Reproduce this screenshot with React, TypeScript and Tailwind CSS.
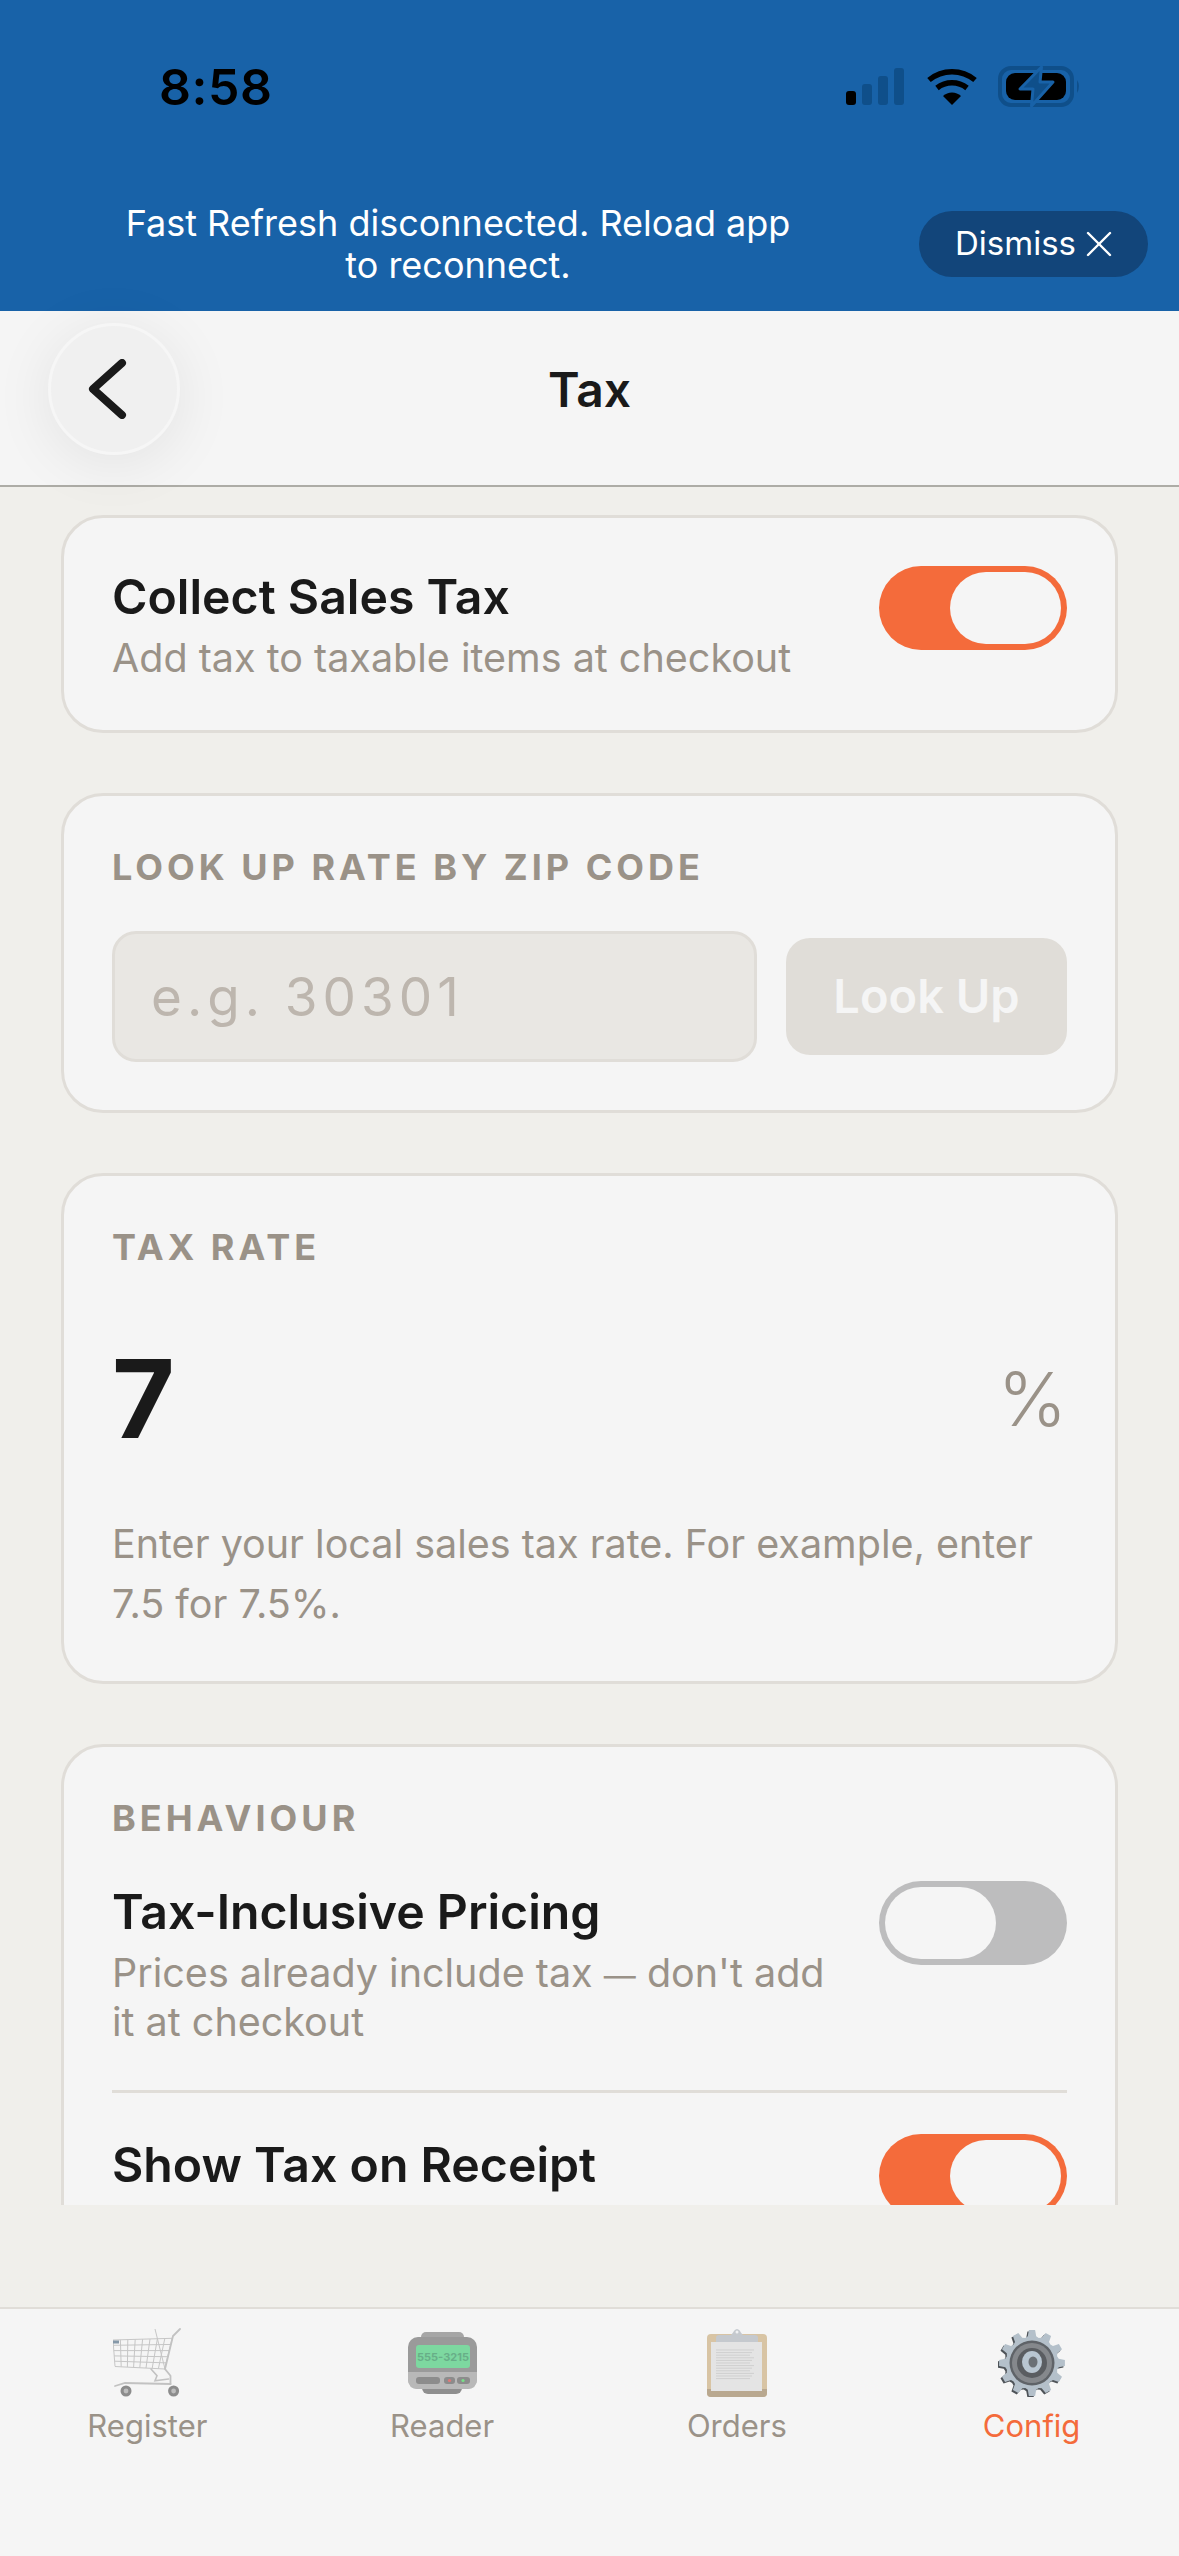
import React from "react";

function StatusIcons() {
  return (
    <svg width="250" height="55" viewBox="0 0 250 55" className="shrink-0">
      {/* signal */}
      <rect x="6" y="32" width="10" height="14" rx="3" fill="#000" />
      <rect x="22" y="25" width="10" height="21" rx="3" fill="#0f4f8a" />
      <rect x="38" y="17" width="10" height="29" rx="3" fill="#0f4f8a" />
      <rect x="54" y="9" width="10" height="37" rx="3" fill="#0f4f8a" />
      {/* wifi */}
      <path d="M89 21 A 36 36 0 0 1 135 21" fill="none" stroke="#000" strokeWidth="5.5" />
      <path d="M97 29 A 24 24 0 0 1 127 29" fill="none" stroke="#000" strokeWidth="5.5" />
      <path d="M103 37 L112 46 L121 37 A 13 13 0 0 0 103 37 Z" fill="#000" />
      {/* battery */}
      <rect x="160" y="9" width="72" height="37" rx="11" fill="none" stroke="#0f4f8a" strokeWidth="4" />
      <rect x="166" y="14" width="60" height="27" rx="9" fill="#000" />
      <path d="M237 21 Q 241 27 237 34 Z" fill="#0f4f8a" />
      <path d="M201.5 8 L180 30 L193 30 L191.5 47 L213 23 L200 23 Z" fill="#0f4f8a" stroke="#1862a8" strokeWidth="3" strokeLinejoin="round" />
    </svg>
  );
}

function CartIcon() {
  const vertical = [0, 1, 2, 3, 4, 5, 6, 7, 8];
  const horizontal = [0, 1, 2, 3, 4, 5];
  return (
    <svg width="68" height="70" viewBox="0 0 68 70">
      <g stroke="#c6c6c6" strokeWidth="1" fill="none">
        {vertical.map((i) => (
          <line key={i} x1={i * 7.4} y1={12 - i * 0.2} x2={2 + i * 6.2} y2={38.3 + i * 0.34} />
        ))}
        {horizontal.map((i) => (
          <line key={i} x1={i * 0.4} y1={12 + i * 5.3} x2={59.4 - i * 1.52} y2={10.3 + i * 6.14} />
        ))}
        <line x1="42" y1="1" x2="52" y2="41" />
      </g>
      <g stroke="#c2c2c2" fill="none" strokeLinecap="round">
        <path d="M67 1 L60 8 L52 41 L57.5 47.7 L57.5 56" strokeWidth="1.8" />
        <path d="M2 58 L12 55 L57.5 56" strokeWidth="1.8" />
        <path d="M38 41 L44 47.7 L42 52.7 L55.6 51" strokeWidth="1.6" />
      </g>
      <rect x="0" y="12.5" width="6" height="3" fill="#8598a8" />
      <circle cx="13" cy="63" r="5.5" fill="#8c8c8c" />
      <circle cx="13" cy="63" r="2.4" fill="#bdbdbd" />
      <circle cx="60.6" cy="63" r="5.5" fill="#8c8c8c" />
      <circle cx="60.6" cy="63" r="2.4" fill="#bdbdbd" />
    </svg>
  );
}

function PagerIcon() {
  return (
    <svg width="69" height="62" viewBox="0 0 69 62">
      <rect x="13" y="0" width="43" height="12" rx="5" fill="#a6a6a6" />
      <rect x="14" y="50" width="40" height="12" rx="6" fill="#8f8f8f" />
      <rect x="0" y="5" width="69" height="52" rx="10" fill="#9a9a9a" />
      <path d="M0 40 H69 V47 Q69 57 59 57 H10 Q0 57 0 47 Z" fill="#b8b8b8" />
      <rect x="8" y="13" width="54" height="23" rx="3" fill="#7dd8a0" />
      <text x="35" y="29" textAnchor="middle" fontSize="11" fontWeight="700" fill="#68ae88" fontFamily="Inter, sans-serif">
        555-3215
      </text>
      <rect x="8" y="45" width="24" height="7" rx="3" fill="#8c8c8c" />
      <rect x="36" y="45" width="11" height="7" rx="3" fill="#8c8c8c" />
      <circle cx="41.5" cy="48.5" r="1.6" fill="#e07878" />
      <rect x="49" y="45" width="13" height="7" rx="3" fill="#8c8c8c" />
      <circle cx="55" cy="48.5" r="1.6" fill="#78e088" />
    </svg>
  );
}

function ClipboardIcon() {
  const lines = [0, 1, 2, 3, 4, 5, 6, 7, 8, 9, 10, 11];
  return (
    <svg width="60" height="68" viewBox="0 0 60 68">
      <rect x="0" y="5" width="60" height="63" rx="4" fill="#d8c4a4" />
      <path d="M0 60 H60 V64 Q60 68 56 68 H4 Q0 68 0 64 Z" fill="#b9a88f" />
      <rect x="4" y="13" width="51" height="49" fill="#e4e4e4" />
      {lines.map((i) => (
        <line key={i} x1="9" y1={21 + i * 2.6} x2={47 - (i % 3) * 2} y2={21 + i * 2.6} stroke="#cfcfcf" strokeWidth="1" />
      ))}
      <path d="M9 9 Q9 6 12 6 H23 C26 6 26 1 30 0 C34 1 34 6 37 6 H48 Q51 6 51 9 V13 H9 Z" fill="#c5c9ce" />
      <circle cx="30" cy="3" r="1.5" fill="#f0f1f3" />
    </svg>
  );
}

function GearIcon() {
  const teeth = 12;
  const pts: string[] = [];
  for (let i = 0; i < teeth; i++) {
    const a = (i / teeth) * Math.PI * 2;
    const s = (Math.PI * 2) / teeth;
    const p = (r: number, t: number) =>
      `${(34 + r * Math.cos(a + t)).toFixed(1)},${(34 + r * Math.sin(a + t)).toFixed(1)}`;
    pts.push(p(26, -0.5 * s), p(27, -0.3 * s), p(33, -0.18 * s), p(33, 0.18 * s), p(27, 0.3 * s));
  }
  const outline = pts.join(" ");
  return (
    <svg width="68" height="68" viewBox="0 0 68 68">
      <polygon points={outline} fill="#4e5358" transform="translate(-1.5 1.5)" />
      <polygon points={outline} fill="#b4c0ca" />
      <circle cx="34" cy="34" r="22.5" fill="#5f6368" />
      <circle cx="34" cy="34" r="20" fill="#85888c" />
      <circle cx="34" cy="34" r="15" fill="#5a5d61" />
      <ellipse cx="34" cy="33" rx="10" ry="11" fill="#b9c6d1" />
      <ellipse cx="35" cy="33" rx="4.5" ry="5.5" fill="#6b7075" />
    </svg>
  );
}

function Toggle({ on }: { on: boolean }) {
  return (
    <div
      className={
        on
          ? "w-[188px] h-[84px] shrink-0 rounded-full bg-[#f46b3b] p-[6px] flex justify-end"
          : "w-[188px] h-[84px] shrink-0 rounded-full bg-[#bdbdbe] p-[6px] flex justify-start"
      }
    >
      <div className="w-[111px] h-[72px] rounded-full bg-[#f5f5f5]" />
    </div>
  );
}

function Label({ children }: { children: React.ReactNode }) {
  return (
    <div className="text-[36px] leading-[46px] font-bold tracking-[4px] text-[#9a9288]">{children}</div>
  );
}

function Card({ pb, children }: { pb: string; children: React.ReactNode }) {
  return (
    <section className={`${pb} shrink-0 rounded-[42px] border-[3px] border-[#e0ddd8] bg-[#f5f5f5] px-[48px] pt-[48px]`}>
      {children}
    </section>
  );
}

function Tab({ icon, label, active }: { icon: React.ReactNode; label: string; active?: boolean }) {
  return (
    <div className="flex flex-col items-center">
      <div className="h-[70px] flex items-center">{icon}</div>
      <div
        className={
          active
            ? "mt-[8px] text-[31px] leading-[40px] text-[#f46b3b]"
            : "mt-[8px] text-[31px] leading-[40px] text-[#9a9288]"
        }
      >
        {label}
      </div>
    </div>
  );
}

export default function App() {
  return (
    <div className="w-[1179px] h-[2556px] flex flex-col overflow-hidden bg-[#f0efeb] text-[#1a1a1a] [font-family:Inter,sans-serif]">
      {/* system status and dev banner */}
      <header className="h-[311px] shrink-0 bg-[#1862a8]">
        <div className="h-[172px] flex items-center justify-between pl-[159px] pr-[89px]">
          <span className="pt-[3px] text-[50px] font-semibold text-black tracking-[0.5px]">8:58</span>
          <StatusIcons />
        </div>
        <div className="flex items-center pt-[30px]">
          <p className="w-[916px] shrink-0 text-center text-[36px] leading-[42px] text-white">
            Fast Refresh disconnected. Reload app
            <br />
            to reconnect.
          </p>
          <div className="ml-[3px] w-[229px] h-[66px] rounded-full bg-[#12457a] flex items-center justify-center gap-[10px] text-[33px] text-white">
            Dismiss
            <svg width="26" height="26" viewBox="0 0 26 26" stroke="#fff" strokeWidth="2.4" strokeLinecap="round">
              <line x1="2" y1="2" x2="24" y2="24" />
              <line x1="24" y1="2" x2="2" y2="24" />
            </svg>
          </div>
        </div>
      </header>

      {/* page title */}
      <div className="relative h-[176px] shrink-0 bg-[#f5f5f5] border-b-[2px] border-[#adaca6] flex items-center justify-center pb-[16px]">
        <h1 className="text-[48px] font-semibold">Tax</h1>
        <button className="absolute left-[48px] top-[12px] z-10 w-[132px] h-[132px] rounded-full border-[3px] border-[#f6f6f6] bg-[#f0f0f0] shadow-[0_8px_60px_rgba(0,0,0,0.08)] flex items-center justify-center">
          <svg width="60" height="60" viewBox="0 0 60 60" fill="none" stroke="#1a1a1a" strokeWidth="8" strokeLinecap="round" strokeLinejoin="round">
            <path d="M38 4 L9 30 L38 56" />
          </svg>
        </button>
      </div>

      {/* settings cards */}
      <main className="h-[1718px] shrink-0 overflow-hidden px-[61px] pt-[28px] flex flex-col gap-[60px]">
        <Card pb="pb-[48px]">
          <div className="flex items-start justify-between">
            <div>
              <div className="text-[48.2px] leading-[62px] font-semibold">Collect Sales Tax</div>
              <div className="mt-[6px] text-[39.5px] leading-[48px] text-[#9a9288]">Add tax to taxable items at checkout</div>
            </div>
            <Toggle on />
          </div>
        </Card>

        <Card pb="pb-[48px]">
          <Label>LOOK UP RATE BY ZIP CODE</Label>
          <div className="mt-[41px] flex items-center gap-[29px]">
            <input
              readOnly
              placeholder="e.g. 30301"
              className="w-[645px] h-[131px] rounded-[24px] border-[3px] border-[#e0ddd8] bg-[#e9e7e3] px-[36px] text-[53px] tracking-[5px] placeholder:text-[#bdb6ae] outline-none"
            />
            <div className="flex-1 h-[117px] rounded-[24px] bg-[#e0ddd8] flex items-center justify-center text-[47px] font-semibold text-[#f5f5f5]">
              Look Up
            </div>
          </div>
        </Card>

        <Card pb="pb-[47px]">
          <Label>TAX RATE</Label>
          <div className="mt-[64px] flex items-center justify-between h-[130px]">
            <span className="text-[108px] leading-[130px] font-bold">7</span>
            <span className="text-[74px] leading-[130px] font-light text-[#9a9288]">%</span>
          </div>
          <p className="mt-[50px] text-[39.5px] leading-[60px] text-[#9a9288]">
            Enter your local sales tax rate. For example, enter
            <br />
            7.5 for 7.5%.
          </p>
        </Card>

        <Card pb="pb-[60px]">
          <Label>BEHAVIOUR</Label>
          <div className="mt-[40px] flex items-start justify-between">
            <div>
              <div className="text-[48.2px] leading-[62px] font-semibold">Tax-Inclusive Pricing</div>
              <div className="mt-[7px] text-[39.5px] leading-[47px] text-[#9a9288]">
                Prices already include tax <span className="text-[32px]">—</span> don't add
                <br />
                it at checkout
              </div>
            </div>
            <Toggle on={false} />
          </div>
          <div className="mt-[44px] mb-[41px] h-[3px] bg-[#e0ddd8]" />
          <div className="flex items-start justify-between">
            <div className="text-[48.2px] leading-[62px] font-semibold">Show Tax on Receipt</div>
            <Toggle on />
          </div>
        </Card>
      </main>

      <div className="flex-1" />

      {/* bottom tabs */}
      <nav className="h-[249px] shrink-0 border-t-[2px] border-[#e0ddd8] bg-[#f5f5f5] grid grid-cols-4 pt-[19px] content-start">
        <Tab icon={<CartIcon />} label="Register" />
        <Tab icon={<PagerIcon />} label="Reader" />
        <Tab icon={<ClipboardIcon />} label="Orders" />
        <Tab icon={<GearIcon />} label="Config" active />
      </nav>
    </div>
  );
}
